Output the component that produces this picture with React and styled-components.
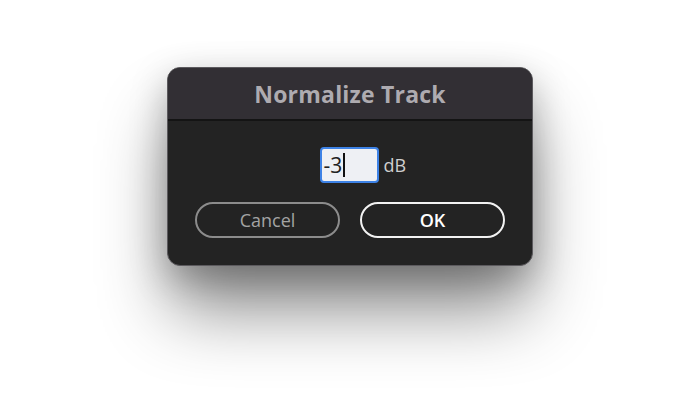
import styled, { createGlobalStyle } from 'styled-components'

const Global = createGlobalStyle`
  html, body {
    margin: 0;
    background: #fff;
    font-family: 'Open Sans', 'Liberation Sans', sans-serif;
  }
`

const Page = styled.div`
  width: 700px;
  height: 400px;
  display: flex;
  justify-content: center;
  align-items: flex-start;
  padding-top: 67px;
  box-sizing: border-box;
`

const Dialog = styled.div`
  width: 364px;
  border: 1px solid #5c5a5e;
  border-radius: 13px;
  background: #232323;
  overflow: hidden;
  box-shadow: 0 48px 70px -4px rgba(0, 0, 0, 0.45), 0 12px 36px rgba(0, 0, 0, 0.25);
`

const Header = styled.div`
  height: 51px;
  display: flex;
  align-items: center;
  justify-content: center;
  background: #322f34;
  border-bottom: 2px solid #141414;
`

const Title = styled.h1`
  margin: 0;
  font-size: 23px;
  font-weight: 700;
  color: #aeabb0;
  letter-spacing: 0.2px;
`

const Body = styled.div`
  padding: 26px 27px 27px;
  display: flex;
  flex-direction: column;
  gap: 19px;
`

const InputRow = styled.div`
  display: grid;
  grid-template-columns: 1fr auto 1fr;
  align-items: center;
`

const Field = styled.div`
  grid-column: 2;
  width: 59px;
  height: 36px;
  box-sizing: border-box;
  border: 2px solid #3d82e6;
  border-radius: 4px;
  background: #eef0f4;
  display: flex;
  align-items: center;
  padding-left: 2px;
  margin-right: 2px;
  font-size: 21px;
  color: #222;
`

const Caret = styled.span`
  display: inline-block;
  width: 1.5px;
  height: 24px;
  background: #111;
  margin-left: 1px;
`

const Unit = styled.span`
  grid-column: 3;
  justify-self: start;
  margin-left: 3px;
  font-size: 18px;
  color: #cfcfcf;
`

const Buttons = styled.div`
  display: flex;
  justify-content: space-between;
`

const Button = styled.button`
  width: 145px;
  height: 36px;
  border-radius: 18px;
  background: transparent;
  border: 2px solid ${(p) => (p.primary ? '#f2f2f2' : '#8c8c8c')};
  color: ${(p) => (p.primary ? '#ffffff' : '#a3a3a3')};
  font-family: inherit;
  font-size: 18px;
  font-weight: ${(p) => (p.primary ? 600 : 400)};
  padding: 0;
`

const App = () => {
  return (
    <Page>
      <Global />
      <Dialog>
        <Header>
          <Title>Normalize Track</Title>
        </Header>
        <Body>
          <InputRow>
            <Field>
              -3
              <Caret />
            </Field>
            <Unit>dB</Unit>
          </InputRow>
          <Buttons>
            <Button>Cancel</Button>
            <Button primary>OK</Button>
          </Buttons>
        </Body>
      </Dialog>
    </Page>
  )
}

export default App
